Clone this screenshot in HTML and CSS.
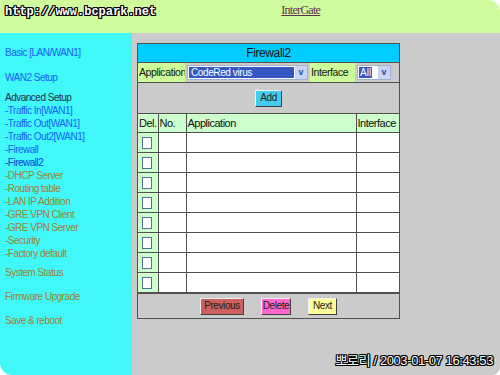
FILE: index.html
```html
<!DOCTYPE html>
<html lang="ko">
<head>
    <meta charset="UTF-8">
    <title>InterGate - Firewall2</title>
    <link rel="stylesheet" href="styles.css">
</head>
<body>
    <div class="screen">
        <div class="topbar">
            <span class="site">http://www.bcpark.net</span>
            <a class="brand" href="#">InterGate</a>
        </div>
        <div class="main">
            <div class="side">
                <a class="menu top" href="#">Basic [LAN/WAN1]</a>
                <a class="menu wan2" href="#">WAN2 Setup</a>
                <div class="menu adv">Advanced Setup</div>
                <a class="sub" href="#">-Traffic In[WAN1]</a>
                <a class="sub" href="#">-Traffic Out[WAN1]</a>
                <a class="sub" href="#">-Traffic Out2[WAN1]</a>
                <a class="sub" href="#">-Firewall</a>
                <a class="sub current" href="#">-Firewall2</a>
                <a class="sub olive" href="#">-DHCP Server</a>
                <a class="sub olive" href="#">-Routing table</a>
                <a class="sub olive" href="#">-LAN IP Addition</a>
                <a class="sub olive" href="#">-GRE VPN Client</a>
                <a class="sub olive" href="#">-GRE VPN Server</a>
                <a class="sub olive" href="#">-Security</a>
                <a class="sub olive" href="#">-Factory default</a>
                <a class="menu olive status" href="#">System Status</a>
                <a class="menu olive later" href="#">Firmware Upgrade</a>
                <a class="menu olive later" href="#">Save &amp; reboot</a>
            </div>
            <div class="content">
                <div class="panel">
                    <div class="title">Firewall2</div>
                    <div class="pick">
                        <div class="label app-label">Application</div>
                        <div class="field">
                            <div class="select wide">
                                <span class="chosen">CodeRed virus</span>
                                <span class="arrow">v</span>
                            </div>
                        </div>
                        <div class="label if-label">Interface</div>
                        <div class="field">
                            <div class="select small">
                                <span class="chosen-small">All</span>
                                <span class="arrow">v</span>
                            </div>
                        </div>
                    </div>
                    <div class="add-row">
                        <button class="btn add">Add</button>
                    </div>
                    <table class="list">
                        <colgroup>
                            <col class="w-del">
                            <col class="w-no">
                            <col class="w-app">
                            <col>
                        </colgroup>
                        <tr class="head">
                            <td class="c-del">Del.</td>
                            <td>No.</td>
                            <td>Application</td>
                            <td>Interface</td>
                        </tr>
                        <tr><td class="c-del"><span class="box"></span></td><td></td><td></td><td></td></tr>
                        <tr><td class="c-del"><span class="box"></span></td><td></td><td></td><td></td></tr>
                        <tr><td class="c-del"><span class="box"></span></td><td></td><td></td><td></td></tr>
                        <tr><td class="c-del"><span class="box"></span></td><td></td><td></td><td></td></tr>
                        <tr><td class="c-del"><span class="box"></span></td><td></td><td></td><td></td></tr>
                        <tr><td class="c-del"><span class="box"></span></td><td></td><td></td><td></td></tr>
                        <tr><td class="c-del"><span class="box"></span></td><td></td><td></td><td></td></tr>
                        <tr><td class="c-del"><span class="box"></span></td><td></td><td></td><td></td></tr>
                    </table>
                    <div class="actions">
                        <button class="btn prev">Previous</button>
                        <button class="btn del">Delete</button>
                        <button class="btn next">Next</button>
                    </div>
                </div>
            </div>
        </div>
        <div class="stamp">뽀로리 / 2003-01-07 16:43:53</div>
    </div>
</body>
</html>
```

FILE: styles.css
```css
html, body {
    margin: 0;
    padding: 0;
    background: #ffffff;
}
.screen {
    position: relative;
    width: 500px;
    height: 375px;
    display: flex;
    flex-direction: column;
    overflow: hidden;
    border-radius: 0 12px 8px 12px;
    font-family: "Liberation Sans", Arial, sans-serif;
    font-size: 11px;
}
.topbar {
    height: 33px;
    flex: none;
    background: #d0fb9c;
    display: flex;
    align-items: flex-start;
}
.site {
    margin: 5px 0 0 5px;
    font-family: "Liberation Mono", monospace;
    font-weight: bold;
    font-size: 12px;
    line-height: 14px;
    color: #ffffff;
    text-shadow: 1px 0 0 #000, -1px 0 0 #000, 0 1px 0 #000, 0 -1px 0 #000,
        1px 1px 0 #000, -1px -1px 0 #000, 1px -1px 0 #000, -1px 1px 0 #000;
}
.brand {
    margin: 3px 0 0 125px;
    font-family: "Liberation Serif", serif;
    font-size: 12px;
    line-height: 14px;
    letter-spacing: -0.7px;
    color: #603050;
}
.main {
    flex: 1;
    display: flex;
}
.side {
    width: 132px;
    flex: none;
    background: #40f8f8;
    padding: 13px 0 0 5px;
    box-sizing: border-box;
    display: flex;
    flex-direction: column;
    align-items: flex-start;
}
.side a, .side div {
    font-size: 10px;
    letter-spacing: -0.5px;
    line-height: 13px;
    text-decoration: none;
    color: #1860ff;
    white-space: nowrap;
}
.side .wan2 {
    margin-top: 12px;
}
.side .adv {
    margin-top: 7px;
    color: #203040;
}
.side .current {
    color: #0838d8;
}
.side .olive {
    color: #a08030;
}
.side .status {
    margin-top: 6px;
}
.side .later {
    margin-top: 11px;
}
.content {
    flex: 1;
    background: #cbcbcb;
    padding: 10px 0 0 5px;
}
.panel {
    width: 263px;
    box-sizing: border-box;
    border: 1px solid #505050;
    background: #cbcbcb;
}
.title {
    height: 18px;
    line-height: 18px;
    background: #00ccff;
    text-align: center;
    font-size: 12px;
    letter-spacing: -0.4px;
    color: #101010;
    border-bottom: 1px solid #505050;
}
.pick {
    display: flex;
    height: 19px;
    border-bottom: 1px solid #505050;
}
.label {
    background: #ccff99;
    line-height: 19px;
    font-size: 10.5px;
    letter-spacing: -0.4px;
    color: #101010;
    padding-left: 1px;
    white-space: nowrap;
    overflow: hidden;
}
.app-label {
    width: 46px;
}
.if-label {
    width: 44px;
    margin-left: 2px;
}
.field {
    display: flex;
    align-items: center;
    padding-left: 2px;
}
.select {
    height: 15px;
    box-sizing: border-box;
    border: 1px solid #a0b0d0;
    background: #ffffff;
    display: flex;
    align-items: stretch;
}
.select.wide {
    width: 121px;
}
.select.small {
    width: 34px;
}
.chosen {
    flex: 1;
    margin: 1px;
    background: #3558c0;
    color: #ffffff;
    line-height: 11px;
    padding-left: 2px;
    font-size: 10px;
    letter-spacing: -0.4px;
}
.chosen-small {
    margin: 1px;
    padding: 0 1px;
    background: #3558c0;
    color: #ffffff;
    line-height: 11px;
    font-size: 10px;
}
.arrow {
    width: 12px;
    margin-left: auto;
    background: #c8d4f4;
    color: #3050a0;
    font-size: 9px;
    font-weight: bold;
    text-align: center;
    line-height: 13px;
}
.add-row {
    height: 30px;
    display: flex;
    justify-content: center;
    align-items: center;
    border-bottom: 1px solid #505050;
}
.btn {
    font-family: "Liberation Sans", Arial, sans-serif;
    font-size: 10px;
    letter-spacing: -0.4px;
    height: 17px;
    padding: 0 3px;
    border: 1px solid;
    border-color: #f0f0f0 #404040 #404040 #f0f0f0;
    color: #202020;
    line-height: 14px;
}
.add {
    background: #44ccee;
    padding: 0 4px;
}
.list {
    width: 100%;
    table-layout: fixed;
    border-collapse: collapse;
    background: #ffffff;
}
.w-del {
    width: 20px;
}
.w-no {
    width: 28px;
}
.w-app {
    width: 170px;
}
.list td {
    height: 19px;
    padding: 0 0 0 1px;
    border: 1px solid #505050;
    font-size: 11px;
    letter-spacing: -0.5px;
    color: #101010;
    vertical-align: middle;
    white-space: nowrap;
    overflow: hidden;
}
.list tr:first-child td {
    border-top: none;
    height: 18px;
}
.list td:first-child {
    border-left: none;
}
.list td:last-child {
    border-right: none;
}
.list .head td {
    background: #ccffcc;
}
.c-del {
    background: #ccffcc;
}
.box {
    display: block;
    width: 8px;
    height: 10px;
    margin-left: 3px;
    border: 1px solid #5070a0;
    background: #ffffff;
}
.actions {
    height: 24px;
    border-top: 1px solid #505050;
    display: flex;
    align-items: center;
    padding-left: 62px;
}
.prev {
    background: #cc6060;
    width: 44px;
}
.del {
    background: #ff66cc;
    width: 30px;
    margin-left: 17px;
    padding: 0;
}
.next {
    background: #ffff99;
    width: 29px;
    margin-left: 17px;
}
.stamp {
    position: absolute;
    right: 7px;
    bottom: 6px;
    font-family: "Liberation Sans", "Noto Sans CJK KR", sans-serif;
    font-size: 13px;
    letter-spacing: -0.4px;
    line-height: 16px;
    color: #ffffff;
    text-shadow: 1px 0 0 #000, -1px 0 0 #000, 0 1px 0 #000, 0 -1px 0 #000,
        1px 1px 0 #000, -1px -1px 0 #000, 1px -1px 0 #000, -1px 1px 0 #000;
}
```
